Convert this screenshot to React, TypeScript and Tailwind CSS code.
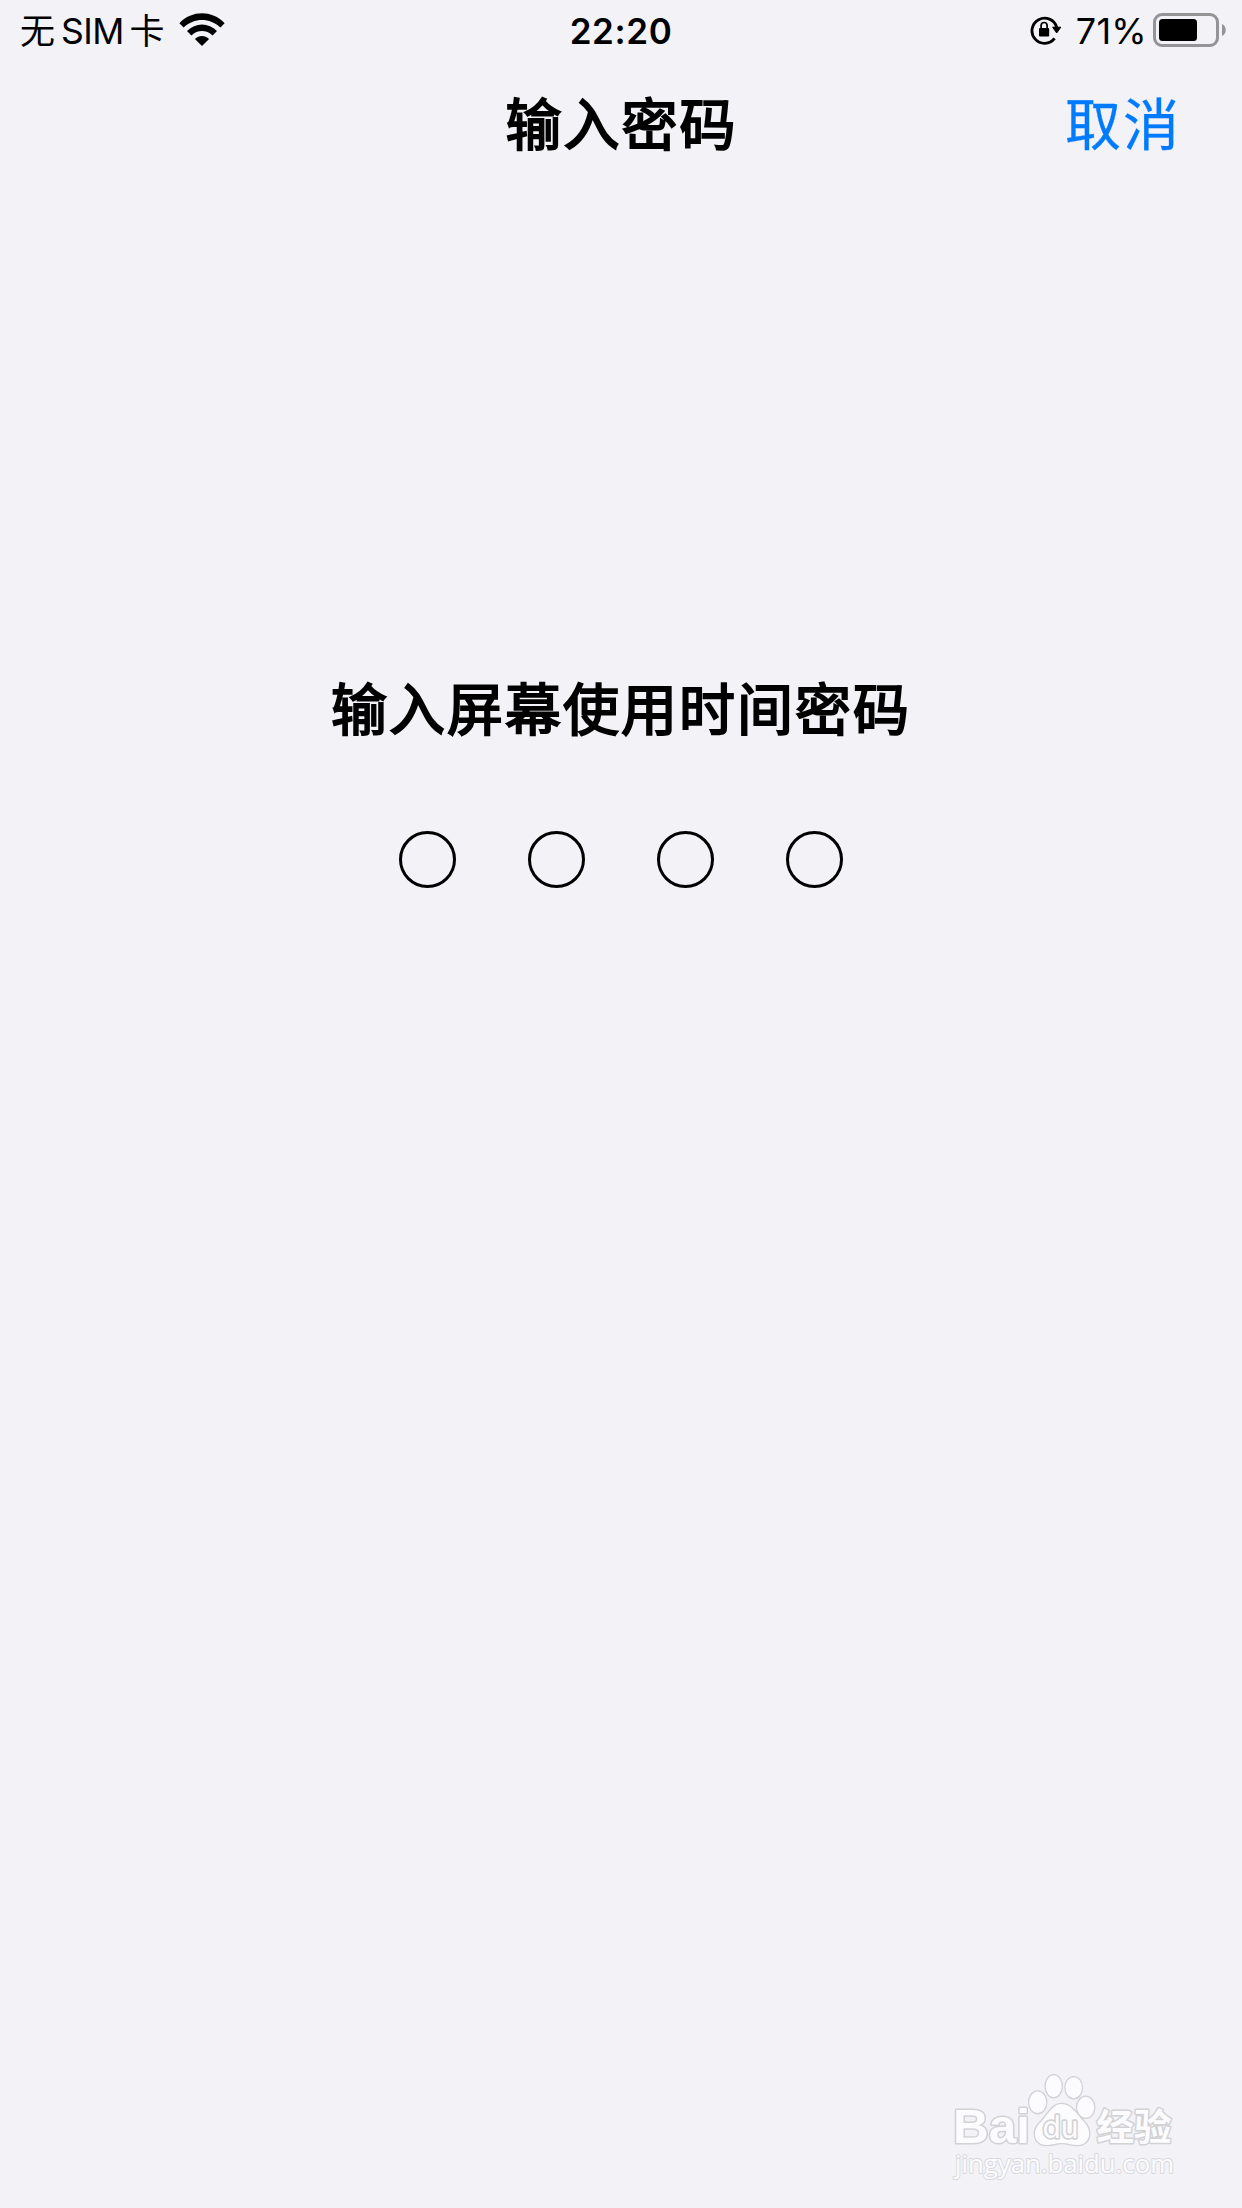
import React from 'react';

const DIGITS = [0, 1, 2, 3];

const WifiIcon: React.FC = () => (
  <svg className="w-[46px] h-[34px]" viewBox="0 0 46 34">
    <path d="M0.4 10.2 C13 -3 33 -3 45.6 10.2 L41.4 14.6 C31 4.6 15 4.6 4.6 14.6 Z" />
    <path d="M8 18 C16.5 9.2 29.5 9.2 38 18 L33.6 22.4 C27.5 16.6 18.5 16.6 12.4 22.4 Z" />
    <path d="M15.9 26 C20 22 26 22 30.1 26 L23 33 Z" />
  </svg>
);

const RotationLockIcon: React.FC = () => (
  <svg className="w-8 h-8" viewBox="0 0 32 32">
    <path d="M24.6 24.4 A12.6 12.6 0 1 1 26.7 13.3" fill="none" stroke="black" strokeWidth="2.8" />
    <path d="M22.6 13.2 H30.8 L26.7 19 Z" stroke="black" strokeWidth="1" strokeLinejoin="round" />
    <rect x="9" y="14" width="10.2" height="8.4" rx="1" />
    <path d="M11.1 15 V11.6 a3 3.1 0 0 1 6 0 V15" fill="none" stroke="black" strokeWidth="1.7" />
  </svg>
);

const BatteryIcon: React.FC = () => (
  <svg className="w-[73px] h-[34px]" viewBox="0 0 73 34">
    <rect x="1.5" y="1.5" width="63" height="31" rx="7.5" fill="none" stroke="#949396" strokeWidth="3" />
    <rect x="6" y="6" width="38" height="22" rx="3.5" />
    <path d="M69 11 C74 13 74 21 69 23 Z" fill="#949396" />
  </svg>
);

const Watermark: React.FC = () => (
  <svg className="w-[230px] h-[110px]" viewBox="0 0 230 110">
    <g fill="#fcfcfe" stroke="#d2d2d5" strokeWidth="3" strokeLinejoin="round" paintOrder="stroke">
      <text x="1" y="71" fontSize="48" fontWeight="700" textLength="77" lengthAdjust="spacingAndGlyphs" className="font-['Liberation_Sans']">Bai</text>
      <ellipse cx="85.7" cy="30.3" rx="8.5" ry="10.8" strokeWidth="2.6" />
      <ellipse cx="101.7" cy="14.2" rx="8" ry="11" strokeWidth="2.6" />
      <ellipse cx="121.7" cy="15.7" rx="8.2" ry="10.5" strokeWidth="2.6" />
      <ellipse cx="133.7" cy="35.3" rx="8.5" ry="10.5" strokeWidth="2.6" />
      <path d="M109.5 32 C119 32 124 41 132 50 C139 57 139 68 131 72 C124 75 117 71 110 71 C102 71 96 75 89 72 C81 68 81 57 88 51 C96 43 100 32 109.5 32 Z" strokeWidth="2.6" />
      <text x="90.5" y="66" fontSize="31" strokeWidth="3.4" textLength="36" lengthAdjust="spacingAndGlyphs" className="font-['Inter']">du</text>
      <text x="144.5" y="69" fontSize="37" fontWeight="700" textLength="75" lengthAdjust="spacingAndGlyphs" className="font-['Noto_Sans_CJK_SC']">经验</text>
      <text x="3" y="101" fontSize="26" fontWeight="500" strokeWidth="2" stroke="#d9d9dd" textLength="219" lengthAdjust="spacingAndGlyphs" className="font-['Open_Sans']">jingyan.baidu.com</text>
    </g>
  </svg>
);

const App: React.FC = () => {
  return (
    <div className="w-[1242px] h-[2208px] bg-[#f2f2f7] text-black flex flex-col overflow-hidden font-[Inter,'Noto_Sans_CJK_SC',sans-serif]">
      <div className="h-[62px] grid grid-cols-3 items-center pl-[20px] pr-[16px] text-[35px] leading-none">
        <div className="flex items-center gap-[14px] -mt-[2px]">
          <div className="flex items-center gap-[6px]">
            <span className="mt-[2px]">无</span>
            <span className="mt-[3px] text-[35.5px] tracking-[-0.6px]">SIM</span>
            <span className="mt-[2px]">卡</span>
          </div>
          <WifiIcon />
        </div>
        <div className="text-center font-semibold tracking-[0.6px] mt-px -ml-[4px]">22:20</div>
        <div className="flex items-center justify-end -mt-[2px]">
          <RotationLockIcon />
          <span className="ml-[14px] mr-[6px] mt-px text-[36px] tracking-[0.3px]">71%</span>
          <BatteryIcon />
        </div>
      </div>

      <div className="h-[126px] grid grid-cols-3 items-center px-[61px] text-[56px] leading-none tracking-[2px]">
        <div />
        <h1 className="text-center pl-px [-webkit-text-stroke:2px_black]">输入密码</h1>
        <button className="text-right text-[#007aff] [-webkit-text-stroke:0.3px_#007aff]">取消</button>
      </div>

      <div className="mt-[490px] flex flex-col items-center">
        <h2 className="text-[56px] leading-[64px] tracking-[2px] [-webkit-text-stroke:2px_black]">输入屏幕使用时间密码</h2>
        <div className="mt-[89px] flex gap-[72px]">
          {DIGITS.map((digit) => (
            <div key={digit} className="w-[57px] h-[57px] rounded-full border-[3px] border-black" />
          ))}
        </div>
      </div>

      <div className="mt-auto self-end mr-[60px] mb-[26px]">
        <Watermark />
      </div>
    </div>
  );
};

export default App;
